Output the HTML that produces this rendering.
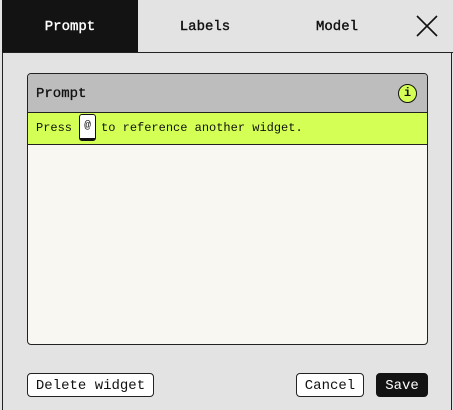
<!DOCTYPE html>
<html><head><meta charset="utf-8"><style>
*{box-sizing:border-box;margin:0;padding:0}
body{width:453px;height:410px;background:#e3e3e3;font-family:"Liberation Mono","DejaVu Sans Mono",monospace;color:#111;position:relative;overflow:hidden}
.frame{position:absolute;left:2px;top:0;width:450px;height:410px;border-left:1px solid #222;border-right:1px solid #222;background:#e3e3e3}
.tabbar{position:absolute;left:2px;top:0;width:451px;height:53px;border-bottom:1px solid #222;background:#e3e3e3}
.tab{position:absolute;top:0;height:52px;line-height:54px;text-align:center;font-size:14px;-webkit-text-stroke:0.4px currentColor}
.t1{left:0;width:136px;background:#131313;color:#fff}
.t2{left:136px;width:134px}
.t3{left:270px;width:130px}
.x{position:absolute;left:414px;top:15px}
.panel{position:absolute;left:27px;top:73px;width:401px;height:272px;border:1px solid #222;border-radius:4px;background:#f8f7f2;overflow:hidden}
.ph{height:39px;background:#bdbdbd;border-bottom:1px solid #222;font-size:14px;padding-left:8px;line-height:40px;position:relative;-webkit-text-stroke:0.3px #111}
.info{position:absolute;right:10px;top:10px;width:19px;height:19px;border:1.5px solid #111;border-radius:50%;background:#d4ff55;font-size:12px;line-height:16px;text-align:center;font-weight:bold;-webkit-text-stroke:0}
.hint{height:32px;background:#d4ff55;border-bottom:1px solid #222;font-size:12px;line-height:31px;padding-left:8px}
.key{display:inline-block;background:#fff;border:1px solid #111;border-bottom-width:3px;border-radius:3px;width:17px;height:27px;line-height:22px;text-align:center;vertical-align:middle;margin:0 5px 0 7px;font-size:11px}
.btn{position:absolute;top:373px;height:24px;border:1px solid #222;border-radius:4px;background:#fff;font-size:14px;line-height:24px;text-align:center}
</style></head><body>
<div class="frame"></div>
<div class="tabbar">
<div class="tab t1">Prompt</div>
<div class="tab t2">Labels</div>
<div class="tab t3">Model</div>
<svg class="x" width="22" height="22" viewBox="0 0 22 22"><path d="M1 1L21 21M21 1L1 21" stroke="#111" stroke-width="1.6"/></svg>
</div>
<div class="panel">
<div class="ph">Prompt<div class="info">i</div></div>
<div class="hint">Press<span class="key">@</span>to reference another widget.</div>
</div>
<div class="btn" style="left:27px;width:127px">Delete widget</div>
<div class="btn" style="left:296px;width:68px">Cancel</div>
<div class="btn" style="left:376px;width:52px;background:#131313;color:#fff;border-color:#131313">Save</div>
</body></html>
